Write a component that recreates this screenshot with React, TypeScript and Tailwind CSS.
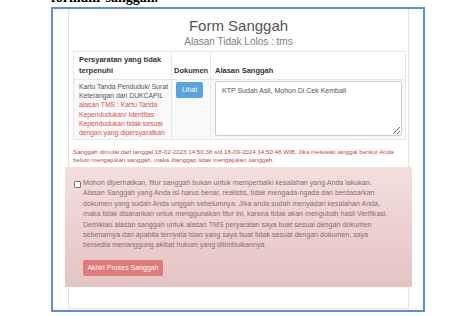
export default function App() {
  return (
    <div className="w-[474px] h-[316px] overflow-hidden bg-white font-['Liberation_Sans',Arial,sans-serif]">
      <div className="pl-[51px]">
        <div className="-mt-[11px] h-[18px] font-['Liberation_Serif',serif] font-bold text-[14px] leading-[18px] text-black">
          formulir sanggah.
        </div>
        <div className="w-[374px] h-[305px] border-2 border-[#5b8fd9] overflow-hidden">
          <div className="ml-[15px] w-[341px] h-[300px] border-x border-b border-[#e3e3e3] px-[4px]">
            <div className="pt-[8px] text-center text-[15px] leading-[18px] text-[#555] font-light">Form Sanggah</div>
            <div className="text-center text-[10px] leading-[14px] text-[#808080]">Alasan Tidak Lolos : tms</div>
            <table className="mt-[2px] w-[332px] table-fixed border-collapse border border-[#e6e6e6] text-[7.5px]">
              <thead>
                <tr className="h-[28px]">
                  <th className="w-[98px] border border-[#e6e6e6] px-[5px] pb-[3px] align-bottom text-left font-bold leading-[11px] text-[#333]">
                    Persyaratan yang tidak<br />terpenuhi
                  </th>
                  <th className="w-[39px] border border-[#e6e6e6] px-[2px] pb-[3px] align-bottom text-left font-bold leading-[11px] text-[#333]">
                    Dokumen
                  </th>
                  <th className="w-[195px] border border-[#e6e6e6] px-[4px] pb-[3px] align-bottom text-left font-bold leading-[11px] text-[#333]">
                    Alasan Sanggah
                  </th>
                </tr>
              </thead>
              <tbody>
                <tr className="h-[60px] bg-[#f9f9f9]">
                  <td className="border border-[#e6e6e6] pl-[5px] pr-[2px] pt-[2px] align-top text-[6.8px] leading-[9.2px] text-[#555]">
                    <div className="whitespace-nowrap">Kartu Tanda Penduduk/ Surat</div>
                    <div className="whitespace-nowrap">Keterangan dari DUKCAPIL</div>
                    <div className="whitespace-nowrap text-[#d9534f]">alasan TMS : Kartu Tanda</div>
                    <div className="whitespace-nowrap text-[#d9534f]">Kependudukan/ Identitas</div>
                    <div className="whitespace-nowrap text-[#d9534f]">Kependudukan tidak sesuai</div>
                    <div className="whitespace-nowrap text-[#d9534f]">dengan yang dipersyaratkan</div>
                  </td>
                  <td className="border border-[#e6e6e6] px-[4px] pt-[2px] align-top">
                    <div className="flex h-[16px] w-[27px] items-center justify-center rounded-[2px] bg-[#5ba3dc] text-[7px] text-white">Lihat</div>
                  </td>
                  <td className="border border-[#e6e6e6] px-[4px] pt-[1px] pb-[2px] align-top">
                    <textarea
                      readOnly
                      value="KTP Sudah Asli, Mohon Di Cek Kembali"
                      className="block h-[55px] w-[187px] rounded-[2px] border border-[#ccc] bg-white px-[6px] py-[4px] text-[7px] leading-[9px] text-[#555] outline-none"
                    />
                  </td>
                </tr>
              </tbody>
            </table>
            <div className="mt-[8px] whitespace-nowrap text-[6.2px] leading-[7.5px] text-[#c9443f]">
              Sanggah dimulai dari tanggal 18-02-2023 14:50:38 s/d 18-09-2024 14:50:48 WIB. Jika melewati tanggal berikut Anda
              <br />
              belum mengajukan sanggah, maka dianggap tidak mengajukan sanggah.
            </div>
            <div className="-mx-[8px] mt-[4px] h-[120px] bg-gradient-to-b from-[#f3dfdf] to-[#e5c3c3] pl-[9px] pt-[13px]">
              <div className="flex">
                <div className="mt-[1px] mr-[2px] h-[7px] w-[7px] shrink-0 border border-[#777] bg-white rounded-[1px]" />
                <div className="-mt-[2px] whitespace-nowrap text-[7.1px] leading-[10.4px] text-[#8a6f6f]">
                  Mohon diperhatikan, fitur sanggah bukan untuk memperbaiki kesalahan yang Anda lakukan.
                  <br />
                  Alasan Sanggah yang Anda isi harus benar, realistis, tidak mengada-ngada dan berdasarkan
                  <br />
                  dokumen yang sudah Anda unggah sebelumnya. Jika anda sudah menyadari kesalahan Anda,
                  <br />
                  maka tidak disarankan untuk menggunakan fitur ini, karena tidak akan mengubah hasil Verifikasi.
                  <br />
                  Demikian alasan sanggah untuk alasan TMS peryaratan saya buat sesuai dengan dokumen
                  <br />
                  sebenarnya dan apabila ternyata isian yang saya buat tidak sesuai dengan dokumen, saya
                  <br />
                  bersedia menanggung akibat hukum yang ditimbulkannya
                  <div className="mt-[9px] flex h-[16px] w-[80px] items-center justify-center rounded-[2px] bg-[#e07a79] text-[7px] text-white">
                    Akhiri Proses Sanggah
                  </div>
                </div>
              </div>
            </div>
          </div>
        </div>
      </div>
    </div>
  );
}
